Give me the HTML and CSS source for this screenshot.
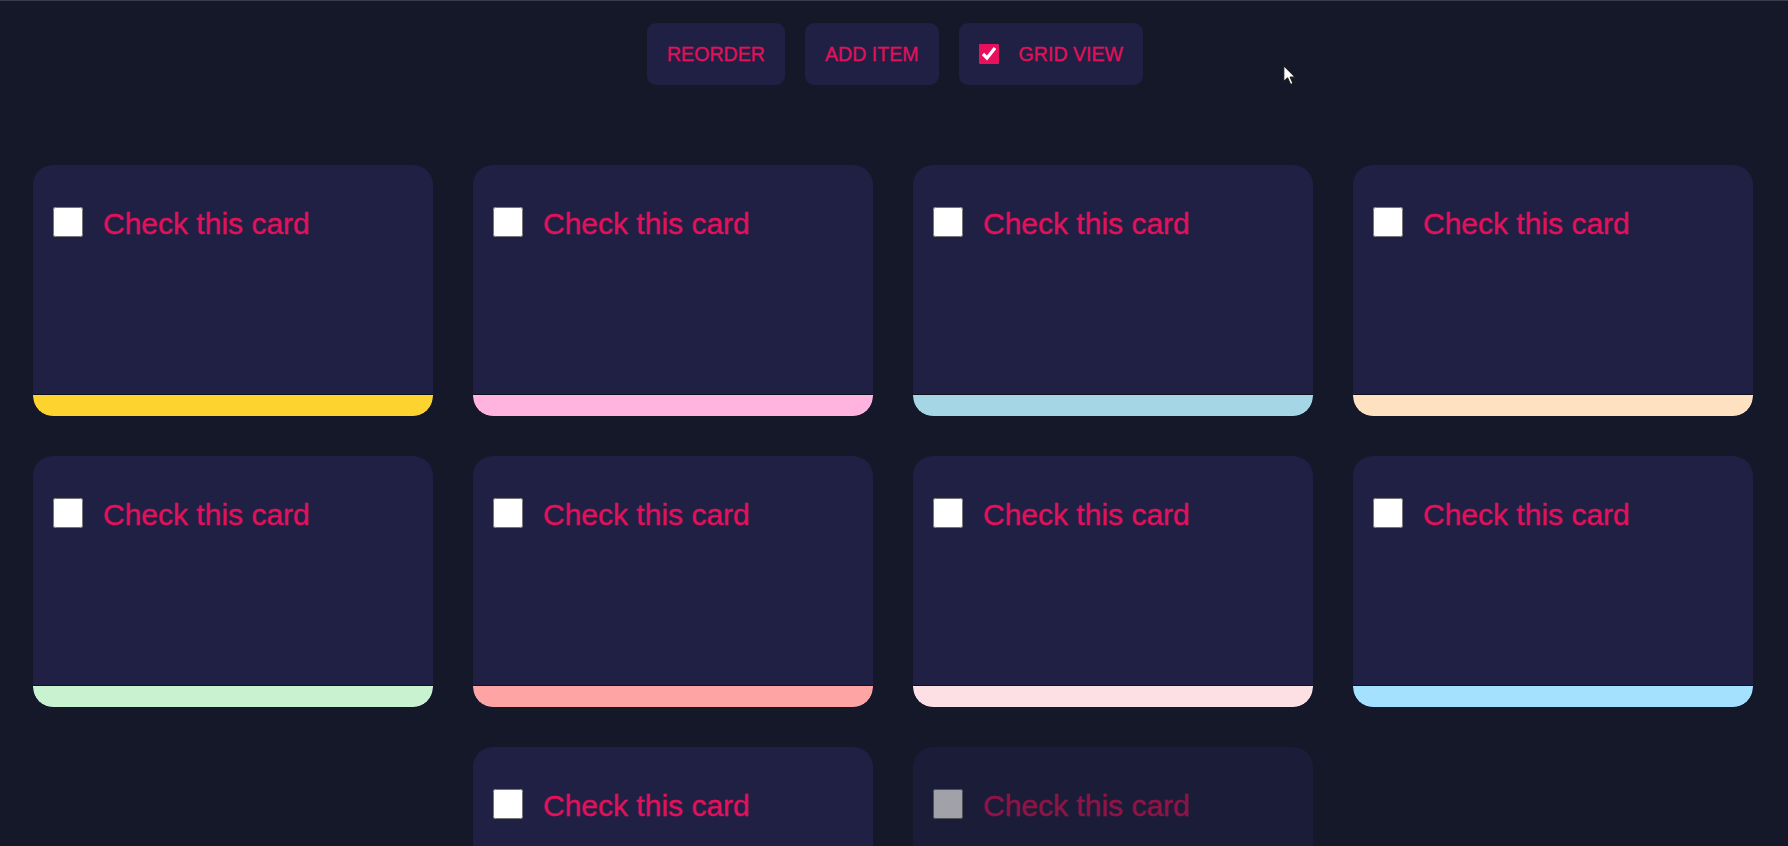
FILE: index.html
```html
<!DOCTYPE html>
<html lang="en">
<head>
<meta charset="utf-8">
<title>Cards</title>
<link rel="stylesheet" href="styles.css">
</head>
<body>
  <div class="page">
    <nav class="toolbar">
      <button class="tool-btn">Reorder</button>
      <button class="tool-btn">Add item</button>
      <label class="tool-btn tool-toggle"><input type="checkbox" class="tool-check" checked><span>Grid view</span></label>
    </nav>

    <main class="grid">
      <div class="card"><label class="card-head"><input type="checkbox" class="card-check"><span class="card-label">Check this card</span></label><div class="card-bar bar-yellow"></div></div>
      <div class="card"><label class="card-head"><input type="checkbox" class="card-check"><span class="card-label">Check this card</span></label><div class="card-bar bar-pink"></div></div>
      <div class="card"><label class="card-head"><input type="checkbox" class="card-check"><span class="card-label">Check this card</span></label><div class="card-bar bar-blue"></div></div>
      <div class="card"><label class="card-head"><input type="checkbox" class="card-check"><span class="card-label">Check this card</span></label><div class="card-bar bar-peach"></div></div>
      <div class="card"><label class="card-head"><input type="checkbox" class="card-check"><span class="card-label">Check this card</span></label><div class="card-bar bar-mint"></div></div>
      <div class="card"><label class="card-head"><input type="checkbox" class="card-check"><span class="card-label">Check this card</span></label><div class="card-bar bar-salmon"></div></div>
      <div class="card"><label class="card-head"><input type="checkbox" class="card-check"><span class="card-label">Check this card</span></label><div class="card-bar bar-rose"></div></div>
      <div class="card"><label class="card-head"><input type="checkbox" class="card-check"><span class="card-label">Check this card</span></label><div class="card-bar bar-sky"></div></div>
      <div class="card"><label class="card-head"><input type="checkbox" class="card-check"><span class="card-label">Check this card</span></label><div class="card-bar bar-yellow"></div></div>
      <div class="card card-entering"><label class="card-head"><input type="checkbox" class="card-check"><span class="card-label">Check this card</span></label><div class="card-bar bar-pink"></div></div>
    </main>

    <svg class="cursor" width="15" height="23" viewBox="0 0 14 22" aria-hidden="true">
      <path d="M1.5 1.5 L1.5 17 L5.2 13.4 L8 19.6 L10.4 18.6 L7.7 12.6 L12.6 12.6 Z" fill="#ffffff" stroke="#1a1a1a" stroke-width="1.1" stroke-linejoin="round"/>
    </svg>
  </div>
</body>
</html>
```

FILE: styles.css
```css
* {
  box-sizing: border-box;
}

html, body {
  margin: 0;
  padding: 0;
  height: 100%;
  overflow: hidden;
}

body {
  background: #151829;
  font-family: "Liberation Sans", Arial, Helvetica, sans-serif;
  color: #e3105c;
}

.page {
  position: relative;
  min-height: 100%;
  border-top: 1px solid #3a3d4e;
}

.toolbar {
  display: flex;
  justify-content: center;
  gap: 20px;
  padding-top: 22px;
  padding-left: 2px;
}

.tool-btn {
  display: flex;
  align-items: center;
  gap: 20px;
  height: 62px;
  padding: 0 20px;
  border: none;
  border-radius: 9px;
  background: #1f2043;
  color: #e3105c;
  font-family: "Liberation Sans", Arial, Helvetica, sans-serif;
  font-size: 19.6px;
  text-transform: uppercase;
  cursor: pointer;
  -webkit-text-stroke: 0.3px #e3105c;
}

.tool-check {
  width: 20px;
  height: 20px;
  margin: 0;
  accent-color: #e8105c;
}

.grid {
  display: flex;
  flex-wrap: wrap;
  justify-content: center;
  padding: 60px 15px 0 13px;
}

.card {
  display: flex;
  flex-direction: column;
  width: 400px;
  height: 251px;
  margin: 20px;
  border-radius: 20px;
  background: #1f2043;
  overflow: hidden;
}

.card-entering {
  opacity: 0.6;
}

.card-head {
  display: flex;
  align-items: center;
  gap: 20px;
  padding: 37px 20px 0;
  font-size: 30px;
  line-height: 36px;
  -webkit-text-stroke: 0.35px #e3105c;
}

.card-label {
  padding-top: 4px;
}

.card-check {
  width: 30px;
  height: 30px;
  margin: 0;
  flex: none;
  accent-color: #e8105c;
}

.card-bar {
  margin-top: auto;
  height: 22px;
  border-top: 1px solid #11121e;
  border-radius: 0 0 20px 20px;
}

.bar-yellow { background: #fdd42f; }
.bar-pink   { background: #ffb4df; }
.bar-blue   { background: #a4d6e6; }
.bar-peach  { background: #fee1c1; }
.bar-mint   { background: #c9f3d0; }
.bar-salmon { background: #ffa4a4; }
.bar-rose   { background: #fde0e3; }
.bar-sky    { background: #a4e1ff; }

.cursor {
  position: absolute;
  left: 1282px;
  top: 63px;
}
```
